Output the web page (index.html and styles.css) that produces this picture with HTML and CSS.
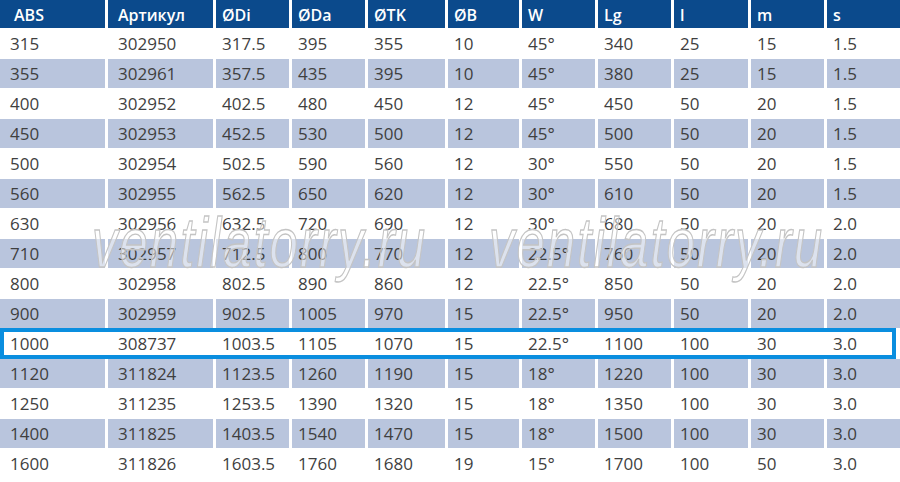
FILE: index.html
```html
<!DOCTYPE html>
<html>
<head>
<meta charset="utf-8">
<link rel="stylesheet" href="styles.css">
</head>
<body>
<div class="sheet">
  <div class="row head">
    <div class="c">ABS</div><div class="c">Артикул</div><div class="c">ØDi</div><div class="c">ØDa</div><div class="c">ØTK</div><div class="c">ØB</div><div class="c">W</div><div class="c">Lg</div><div class="c">l</div><div class="c">m</div><div class="c">s</div>
  </div>
  <div class="row">
    <div class="c">315</div><div class="c">302950</div><div class="c">317.5</div><div class="c">395</div><div class="c">355</div><div class="c">10</div><div class="c">45°</div><div class="c">340</div><div class="c">25</div><div class="c">15</div><div class="c">1.5</div>
  </div>
  <div class="row alt">
    <div class="c">355</div><div class="c">302961</div><div class="c">357.5</div><div class="c">435</div><div class="c">395</div><div class="c">10</div><div class="c">45°</div><div class="c">380</div><div class="c">25</div><div class="c">15</div><div class="c">1.5</div>
  </div>
  <div class="row">
    <div class="c">400</div><div class="c">302952</div><div class="c">402.5</div><div class="c">480</div><div class="c">450</div><div class="c">12</div><div class="c">45°</div><div class="c">450</div><div class="c">50</div><div class="c">20</div><div class="c">1.5</div>
  </div>
  <div class="row alt">
    <div class="c">450</div><div class="c">302953</div><div class="c">452.5</div><div class="c">530</div><div class="c">500</div><div class="c">12</div><div class="c">45°</div><div class="c">500</div><div class="c">50</div><div class="c">20</div><div class="c">1.5</div>
  </div>
  <div class="row">
    <div class="c">500</div><div class="c">302954</div><div class="c">502.5</div><div class="c">590</div><div class="c">560</div><div class="c">12</div><div class="c">30°</div><div class="c">550</div><div class="c">50</div><div class="c">20</div><div class="c">1.5</div>
  </div>
  <div class="row alt">
    <div class="c">560</div><div class="c">302955</div><div class="c">562.5</div><div class="c">650</div><div class="c">620</div><div class="c">12</div><div class="c">30°</div><div class="c">610</div><div class="c">50</div><div class="c">20</div><div class="c">1.5</div>
  </div>
  <div class="row">
    <div class="c">630</div><div class="c">302956</div><div class="c">632.5</div><div class="c">720</div><div class="c">690</div><div class="c">12</div><div class="c">30°</div><div class="c">680</div><div class="c">50</div><div class="c">20</div><div class="c">2.0</div>
  </div>
  <div class="row alt">
    <div class="c">710</div><div class="c">302957</div><div class="c">712.5</div><div class="c">800</div><div class="c">770</div><div class="c">12</div><div class="c">22.5°</div><div class="c">760</div><div class="c">50</div><div class="c">20</div><div class="c">2.0</div>
  </div>
  <div class="row">
    <div class="c">800</div><div class="c">302958</div><div class="c">802.5</div><div class="c">890</div><div class="c">860</div><div class="c">12</div><div class="c">22.5°</div><div class="c">850</div><div class="c">50</div><div class="c">20</div><div class="c">2.0</div>
  </div>
  <div class="row alt">
    <div class="c">900</div><div class="c">302959</div><div class="c">902.5</div><div class="c">1005</div><div class="c">970</div><div class="c">15</div><div class="c">22.5°</div><div class="c">950</div><div class="c">50</div><div class="c">20</div><div class="c">2.0</div>
  </div>
  <div class="row sel">
    <div class="c">1000</div><div class="c">308737</div><div class="c">1003.5</div><div class="c">1105</div><div class="c">1070</div><div class="c">15</div><div class="c">22.5°</div><div class="c">1100</div><div class="c">100</div><div class="c">30</div><div class="c">3.0</div>
  </div>
  <div class="row alt">
    <div class="c">1120</div><div class="c">311824</div><div class="c">1123.5</div><div class="c">1260</div><div class="c">1190</div><div class="c">15</div><div class="c">18°</div><div class="c">1220</div><div class="c">100</div><div class="c">30</div><div class="c">3.0</div>
  </div>
  <div class="row">
    <div class="c">1250</div><div class="c">311235</div><div class="c">1253.5</div><div class="c">1390</div><div class="c">1320</div><div class="c">15</div><div class="c">18°</div><div class="c">1350</div><div class="c">100</div><div class="c">30</div><div class="c">3.0</div>
  </div>
  <div class="row alt">
    <div class="c">1400</div><div class="c">311825</div><div class="c">1403.5</div><div class="c">1540</div><div class="c">1470</div><div class="c">15</div><div class="c">18°</div><div class="c">1500</div><div class="c">100</div><div class="c">30</div><div class="c">3.0</div>
  </div>
  <div class="row">
    <div class="c">1600</div><div class="c">311826</div><div class="c">1603.5</div><div class="c">1760</div><div class="c">1680</div><div class="c">19</div><div class="c">15°</div><div class="c">1700</div><div class="c">100</div><div class="c">50</div><div class="c">3.0</div>
  </div>
  <span class="mark mark-a">ventilatorry.ru</span>
  <span class="mark mark-b">ventilatorry.ru</span>
</div>
</body>
</html>
```

FILE: styles.css
```css
html, body {
  margin: 0;
  padding: 0;
  background: #ffffff;
}

.sheet {
  position: relative;
  width: 900px;
  display: flex;
  flex-direction: column;
  gap: 1px;
  font-family: "Open Sans", "DejaVu Sans", sans-serif;
  font-size: 17px;
  color: #3f3f3f;
  overflow: hidden;
}

.row {
  display: grid;
  grid-template-columns: 105px 105px 73px 73px 77px 71px 73px 73px 74px 73px 73px;
  column-gap: 3px;
  height: 29px;
}

.c {
  display: flex;
  align-items: center;
  padding-left: 6px;
  white-space: nowrap;
}

.c:nth-child(1),
.c:nth-child(2) {
  padding-left: 10px;
}

.head {
  height: 28px;
}

.head .c {
  background: #0b4a8c;
  color: #ffffff;
  font-size: 16px;
  font-weight: 600;
  padding-top: 2px;
  box-sizing: border-box;
}

.head .c:nth-child(1) {
  padding-left: 14px;
}

.alt .c {
  background: #b9c5dd;
}

.sel {
  position: relative;
}

.sel::after {
  content: "";
  position: absolute;
  left: 0;
  top: -1px;
  width: 896px;
  height: 31px;
  box-sizing: border-box;
  border: 4px solid #0a8edf;
  pointer-events: none;
}

.mark {
  position: absolute;
  top: 224px;
  font-family: "Liberation Sans", Arial, sans-serif;
  font-style: italic;
  font-size: 51px;
  line-height: 1;
  letter-spacing: 2px;
  color: rgba(255, 255, 255, 0.5);
  -webkit-text-stroke: 1px #c4c4c4;
  transform: scaleY(1.38);
  transform-origin: 0 43px;
  white-space: nowrap;
  pointer-events: none;
}

.mark-a {
  left: 92px;
}

.mark-b {
  left: 489px;
}
```
